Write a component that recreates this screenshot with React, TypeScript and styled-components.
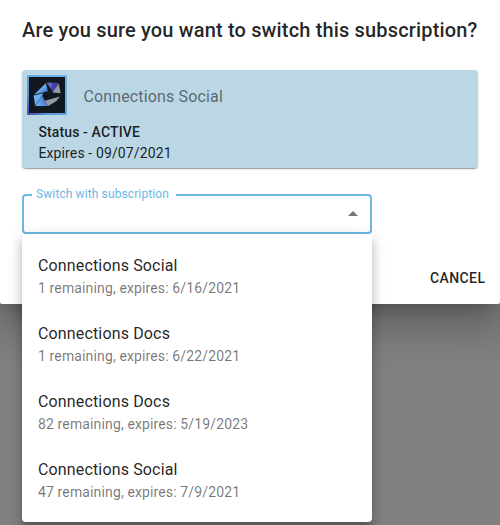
import React from "react";
import styled, { createGlobalStyle } from "styled-components";

const GlobalStyle = createGlobalStyle`
  * { box-sizing: border-box; }
  html, body { margin: 0; height: 100%; overflow: hidden; background: #808080; }
  body { font-family: Roboto, "Liberation Sans", sans-serif; color: rgba(0, 0, 0, 0.87); }
`;

const Dialog = styled.main`
  width: 500px;
  height: 304px;
  padding: 14px 22px 0;
  display: flex;
  flex-direction: column;
  background: #fff;
  border-radius: 0 0 2px 2px;
  box-shadow: 0 11px 15px -7px rgba(0, 0, 0, 0.2), 0 24px 38px 3px rgba(0, 0, 0, 0.14),
    0 9px 46px 8px rgba(0, 0, 0, 0.12);
`;

const Title = styled.h2`
  margin: 0;
  font-size: 20px;
  line-height: 32px;
  font-weight: 500;
  letter-spacing: 0.16px;
  white-space: nowrap;
`;

const Card = styled.section`
  height: 98px;
  margin-top: 24px;
  padding: 5px;
  background: #bbd6e4;
  border-radius: 4px;
  box-shadow: 0 2px 1px -1px rgba(0, 0, 0, 0.2), 0 1px 1px 0 rgba(0, 0, 0, 0.14),
    0 1px 3px 0 rgba(0, 0, 0, 0.12);
`;

const CardHeader = styled.div`
  display: flex;
  align-items: center;
  gap: 16.4px;
  height: 40px;
`;

const ProductName = styled.span`
  font-size: 16px;
  line-height: 24px;
  letter-spacing: 0.15px;
  color: rgba(0, 0, 0, 0.54);
  padding-top: 3px;
`;

const CardLine = styled.div<{ $strong?: boolean }>`
  padding-left: 11.4px;
  font-size: 14px;
  line-height: 21px;
  letter-spacing: 0.13px;
  font-weight: ${(p) => (p.$strong ? 500 : 400)};
`;

const CardDetails = styled.div`
  padding-top: 7px;
`;

const Field = styled.div`
  position: relative;
  width: 350px;
  height: 40px;
  margin-top: 26px;
`;

const Outline = styled.fieldset`
  position: absolute;
  inset: -6px 0 0;
  margin: 0;
  padding: 0 8px;
  border: 2px solid #6cb6e3;
  border-radius: 4px;
`;

const FieldLabel = styled.legend`
  width: 144px;
  height: 14px;
  padding: 0 4px;
  font-size: 12px;
  line-height: 12px;
  letter-spacing: 0.11px;
  color: #6cb6e3;
  white-space: nowrap;
`;

const Arrow = styled.svg`
  position: absolute;
  right: 7px;
  top: 8px;
  width: 24px;
  height: 24px;
  fill: rgba(0, 0, 0, 0.54);
`;

const Menu = styled.ul`
  position: absolute;
  top: 40px;
  left: 0;
  width: 350px;
  margin: 0;
  padding: 8px 0;
  list-style: none;
  background: #fff;
  border-radius: 4px;
  box-shadow: 0 5px 5px -3px rgba(0, 0, 0, 0.2), 0 8px 10px 1px rgba(0, 0, 0, 0.14),
    0 3px 14px 2px rgba(0, 0, 0, 0.12);
`;

const MenuItem = styled.li`
  height: 68px;
  padding: 12px 16px;
`;

const ItemTitle = styled.div`
  font-size: 16px;
  line-height: 24px;
  letter-spacing: 0.15px;
`;

const ItemNote = styled.div`
  font-size: 14px;
  line-height: 20px;
  letter-spacing: 0.135px;
  color: rgba(0, 0, 0, 0.54);
`;

const Actions = styled.footer`
  display: flex;
  justify-content: flex-end;
  margin: 26px -15.4px 0 0;
`;

const TextButton = styled.button`
  padding: 6px 8px;
  border: 0;
  background: none;
  font: 500 14px/24px Roboto, sans-serif;
  letter-spacing: 0.4px;
  color: inherit;
`;

const subscriptions = [
  { name: "Connections Social", note: "1 remaining, expires: 6/16/2021" },
  { name: "Connections Docs", note: "1 remaining, expires: 6/22/2021" },
  { name: "Connections Docs", note: "82 remaining, expires: 5/19/2023" },
  { name: "Connections Social", note: "47 remaining, expires: 7/9/2021" },
];

function ProductLogo() {
  return (
    <svg width="40" height="40" viewBox="0 0 40 40" aria-hidden="true">
      <defs>
        <linearGradient id="frame" x1="0" y1="1" x2="0.65" y2="0.35">
          <stop offset="0" stopColor="#4a45b0" />
          <stop offset="0.4" stopColor="#5b93d6" />
          <stop offset="1" stopColor="#68b2e6" />
        </linearGradient>
        <linearGradient id="blade" x1="0" y1="0" x2="1" y2="1">
          <stop offset="0" stopColor="#70c4f5" />
          <stop offset="0.55" stopColor="#64a9eb" />
          <stop offset="1" stopColor="#3f49ae" />
        </linearGradient>
        <linearGradient id="bladeLow" x1="0" y1="0.8" x2="1" y2="0.4">
          <stop offset="0" stopColor="#6cc0f5" />
          <stop offset="1" stopColor="#4a62c4" />
        </linearGradient>
      </defs>
      <rect width="40" height="40" rx="1" fill="url(#frame)" />
      <rect x="2" y="2" width="36" height="36" fill="#111820" />
      <path d="M18.8 8.3L7.2 19.6L21 16.3Z" fill="url(#blade)" />
      <path d="M6.7 20.6L16.5 18.2L8.2 31Z" fill="url(#blade)" />
      <path d="M15 20.3L20.5 31H8.8Z" fill="url(#bladeLow)" />
      <path d="M19.7 7.8H31.8L26 17.2Z" fill="#4a3da5" />
      <path d="M19.7 7.8H25L24 13.5Z" fill="#6070cb" />
      <path d="M31.7 8.6L33.7 18.2L25.5 17.4Z" fill="#949aa5" />
      <path d="M33 21.6L29.5 26L20.8 31.3L17.8 25.8Z" fill="#949aa5" />
    </svg>
  );
}

export default function App() {
  return (
    <>
      <GlobalStyle />
      <Dialog role="dialog">
        <Title>Are you sure you want to switch this subscription?</Title>
        <Card>
          <CardHeader>
            <ProductLogo />
            <ProductName>Connections Social</ProductName>
          </CardHeader>
          <CardDetails>
            <CardLine $strong>Status - ACTIVE</CardLine>
            <CardLine>Expires - 09/07/2021</CardLine>
          </CardDetails>
        </Card>
        <Field>
          <Outline>
            <FieldLabel>Switch with subscription</FieldLabel>
          </Outline>
          <Arrow viewBox="0 0 24 24" aria-hidden="true">
            <path d="M7 14l5-5 5 5z" />
          </Arrow>
          <Menu>
            {subscriptions.map((item, i) => (
              <MenuItem key={i}>
                <ItemTitle>{item.name}</ItemTitle>
                <ItemNote>{item.note}</ItemNote>
              </MenuItem>
            ))}
          </Menu>
        </Field>
        <Actions>
          <TextButton type="button">CANCEL</TextButton>
        </Actions>
      </Dialog>
    </>
  );
}
